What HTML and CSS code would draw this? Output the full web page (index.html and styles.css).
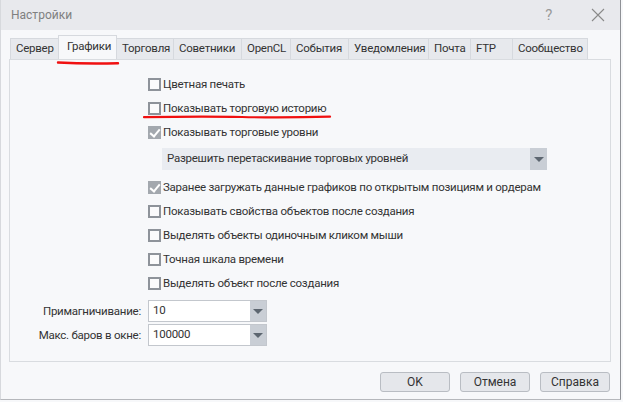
FILE: index.html
```html
<!DOCTYPE html>
<html lang="ru">
<head>
    <meta charset="UTF-8">
    <title>Настройки</title>
    <link rel="stylesheet" href="styles.css">
</head>
<body>
    <div class="window">
        <div class="titlebar">
            <span class="title">Настройки</span>
            <span class="help">?</span>
            <svg class="close" width="14" height="14" viewBox="0 0 14 14">
                <path d="M1 1 L13 13 M13 1 L1 13" stroke="#8a8a8a" stroke-width="1.1" fill="none"/>
            </svg>
        </div>

        <div class="tabs">
            <div class="tab" style="width:49px">Сервер</div>
            <div class="tab active" style="width:59px">Графики</div>
            <div class="tab" style="width:57px">Торговля</div>
            <div class="tab" style="width:68px">Советники</div>
            <div class="tab" style="width:49px">OpenCL</div>
            <div class="tab" style="width:58px">События</div>
            <div class="tab" style="width:80px">Уведомления</div>
            <div class="tab" style="width:42px">Почта</div>
            <div class="tab" style="width:42px">FTP</div>
            <div class="tab" style="width:75px">Сообщество</div>
        </div>

        <div class="panel">
            <div class="options">
                <label class="opt"><span class="box"></span>Цветная печать</label>
                <label class="opt"><span class="box"></span>Показывать торговую историю</label>
                <label class="opt"><span class="box checked"></span>Показывать торговые уровни</label>
                <div class="select wide">
                    <span class="value">Разрешить перетаскивание торговых уровней</span>
                    <span class="arrow"></span>
                </div>
                <label class="opt"><span class="box checked"></span>Заранее загружать данные графиков по открытым позициям и ордерам</label>
                <label class="opt"><span class="box"></span>Показывать свойства объектов после создания</label>
                <label class="opt"><span class="box"></span>Выделять объекты одиночным кликом мыши</label>
                <label class="opt"><span class="box"></span>Точная шкала времени</label>
                <label class="opt"><span class="box"></span>Выделять объект после создания</label>
            </div>

            <div class="fields">
                <div class="field">
                    <span class="field-label">Примагничивание:</span>
                    <div class="select small">
                        <span class="value">10</span>
                        <span class="arrow"></span>
                    </div>
                </div>
                <div class="field">
                    <span class="field-label">Макс. баров в окне:</span>
                    <div class="select small">
                        <span class="value">100000</span>
                        <span class="arrow"></span>
                    </div>
                </div>
            </div>
        </div>

        <div class="buttons">
            <button>OK</button>
            <button>Отмена</button>
            <button>Справка</button>
        </div>

        <!-- red hand-drawn marks over the screenshot -->
        <svg class="mark mark-tab" width="64" height="6" viewBox="0 0 64 6">
            <path d="M2 2.5 Q30 4 62 3.2" stroke="#f01010" stroke-width="2.4" fill="none" stroke-linecap="round"/>
        </svg>
        <svg class="mark mark-opt" width="190" height="6" viewBox="0 0 190 6">
            <path d="M2 3.2 Q60 2 100 3 T188 2.6" stroke="#f01010" stroke-width="2.2" fill="none" stroke-linecap="round"/>
        </svg>
    </div>
</body>
</html>
```

FILE: styles.css
```css
* {
    box-sizing: border-box;
}

body {
    margin: 0;
    font-family: Roboto, "Noto Sans", sans-serif;
    font-size: 11.5px;
    letter-spacing: -0.25px;
    color: #333;
    background: #f7f8fa;
}

.window {
    position: relative;
    width: 621px;
    height: 400px;
    background: #f7f8fa;
    border-left: 1px solid #d7d9dd;
    border-right: 1px solid #8f9196;
    border-bottom: 1px solid #b5b7bb;
}

.titlebar {
    height: 30px;
    display: flex;
    align-items: center;
    background: #e8e9ed;
    padding-left: 10px;
}

.title {
    font-size: 12px;
    letter-spacing: 0;
    color: #808080;
    flex: 1;
}

.help {
    font-size: 15px;
    color: #9a9a9a;
    margin-right: 39px;
}

.close {
    margin-right: 15px;
}

.tabs {
    display: flex;
    align-items: flex-end;
    height: 29px;
    padding-left: 9px;
}

.tab {
    height: 21px;
    line-height: 19px;
    padding-left: 5px;
    background: #e7e9ed;
    border: 1px solid #d6d9de;
    border-bottom: none;
    border-left: none;
    white-space: nowrap;
}

.tab:first-child {
    border-left: 1px solid #d6d9de;
}

.tab.active {
    height: 24px;
    line-height: 20px;
    background: #f7f8fa;
    border-left: 1px solid #d6d9de;
    margin-left: -1px;
    padding-left: 8px;
}

.panel {
    margin: 0 9px 0 8px;
    height: 303px;
    border: 1px solid #d9dce0;
    padding-top: 12px;
}

.options {
    padding-left: 138px;
}

.opt {
    display: flex;
    align-items: center;
    height: 24px;
}

.box {
    width: 13px;
    height: 13px;
    border: 2px solid #8e939a;
    background: #fbfbfc;
    margin-right: 2px;
    position: relative;
}

.box.checked {
    background: #a3a8ae;
    border-color: #a3a8ae;
}

.box.checked::after {
    content: "";
    position: absolute;
    left: 2px;
    top: -1px;
    width: 4px;
    height: 8px;
    border: solid #fff;
    border-width: 0 2px 2px 0;
    transform: rotate(40deg);
}

.select {
    display: flex;
    height: 22px;
}

.select .value {
    flex: 1;
    line-height: 21px;
    padding-left: 5px;
}

.select .arrow {
    width: 17px;
    background: #c9ced5;
    position: relative;
}

.select .arrow::after {
    content: "";
    position: absolute;
    left: 4px;
    top: 9px;
    border-left: 5px solid transparent;
    border-right: 5px solid transparent;
    border-top: 5px solid #5d6670;
}

.select.wide {
    width: 385px;
    margin: 4px 0 5px 14px;
    background: #e9ecf1;
}

.fields {
    margin-top: 5px;
    display: flex;
    flex-direction: column;
    gap: 2px;
}

.field {
    display: flex;
    align-items: center;
}

.field-label {
    width: 131px;
    text-align: right;
    margin-right: 7px;
}

.select.small {
    width: 119px;
    background: #fff;
    border: 1px solid #c3c7cd;
}

.select.small .value {
    line-height: 19px;
    padding-left: 4px;
}

.select.small .arrow {
    width: 16px;
}

.select.small .arrow::after {
    top: 8px;
    left: 3px;
}

.buttons {
    display: flex;
    justify-content: flex-end;
    gap: 10px;
    padding: 10px 10px 0 0;
}

button {
    width: 70px;
    height: 20px;
    padding: 0;
    font-family: inherit;
    font-size: 12px;
    color: #333;
    background: #e5e7eb;
    border: 1px solid #b9bdc3;
    border-radius: 3px;
}

.mark {
    position: absolute;
}

.mark-tab {
    left: 55px;
    top: 60px;
}

.mark-opt {
    left: 141px;
    top: 114px;
}
```
